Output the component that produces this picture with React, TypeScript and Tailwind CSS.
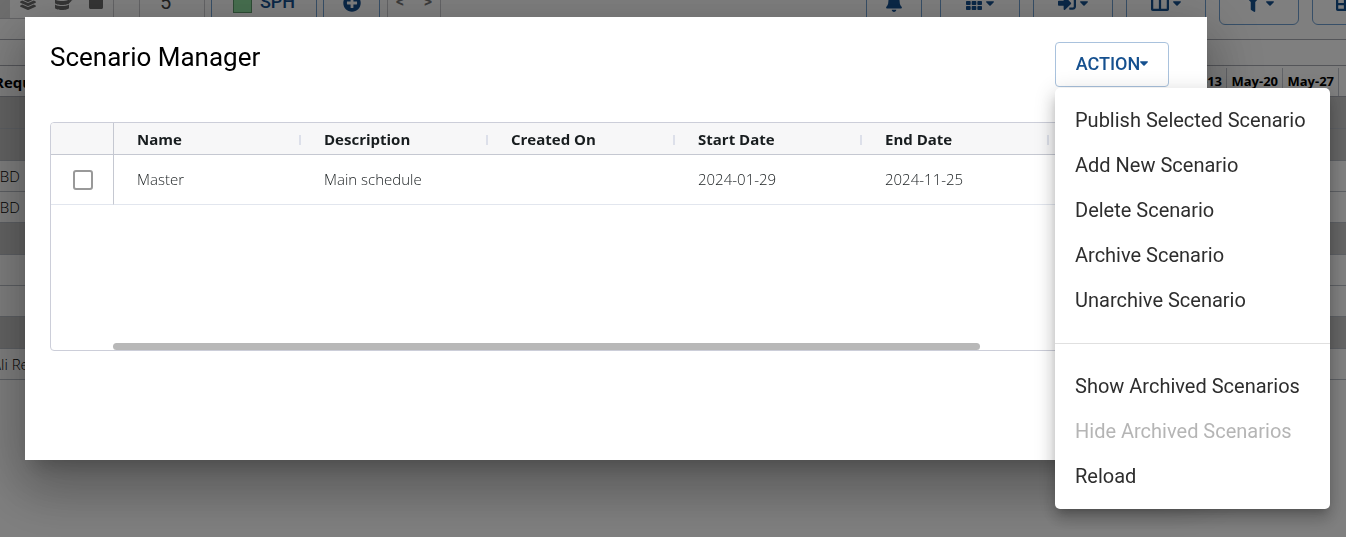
import { FaBell, FaPlusCircle, FaSignInAlt, FaColumns, FaFilter, FaTable, FaLayerGroup, FaDatabase, FaPen, FaSquare, FaTh } from "react-icons/fa";
import type { ReactNode } from "react";

function Caret() {
  return (
    <svg viewBox="0 0 8 5" className="h-[5px] w-2 shrink-0" aria-hidden="true">
      <path d="M0.7 0.2H7.3C7.9 0.2 8.2 0.9 7.8 1.3L4.6 4.5C4.3 4.8 3.7 4.8 3.4 4.5L0.2 1.3C-0.2 0.9 0.1 0.2 0.7 0.2Z" fill="currentColor" />
    </svg>
  );
}

function ToolButton({ label, className, children }: { label: string; className: string; children: ReactNode }) {
  return (
    <button
      type="button"
      aria-label={label}
      className={`flex h-12 shrink-0 items-center justify-center rounded-md border border-[#6f9fd0] pt-1 text-[#15508f] ${className}`}
    >
      {children}
    </button>
  );
}

function Toolbar() {
  return (
    <div className="-mt-[23px] flex h-[63px] items-start justify-between border-b border-[#a9abb3]">
      <div className="flex items-start">
        <div className="flex h-[42px] items-center gap-[18px] border-r border-b border-[#c8c8cc] pr-[9px] text-[#6b6b6b]">
          <span className="-mr-2 h-full w-[10px] bg-[#dcdcdc]" />
          <FaLayerGroup size={16} className="mt-2" />
          <span className="relative mt-2">
            <FaDatabase size={16} />
            <FaPen size={6} className="absolute top-1 -right-[3px]" />
          </span>
          <FaSquare size={16} className="mt-2" />
        </div>
        <input
          aria-label="Interval"
          defaultValue="5"
          className="ml-[25px] h-12 w-[66px] rounded-md border border-[#c8c8cc] pt-[2px] pl-5 text-xl text-[#444]"
        />
        <ToolButton label="SPH" className="ml-[6px] w-[106px] gap-2">
          <span className="size-[19px] border border-[#5b9a6a] bg-[#8ee0a0]" />
          <span className="pb-[2px] text-lg font-medium">SPH</span>
        </ToolButton>
        <ToolButton label="Add" className="ml-[6px] w-[57px]">
          <FaPlusCircle size={18} />
        </ToolButton>
        <div className="ml-[7px] flex h-12 w-[54px] items-center justify-between rounded-md border border-[#c8c8cc] px-2 pt-[2px] font-bold text-[#777]">
          <span>&lt;</span>
          <span>&gt;</span>
        </div>
      </div>
      <div className="-mr-8 flex gap-[13px]">
        <ToolButton label="Notifications" className="mr-[5px] w-[56px]"><FaBell size={18} /></ToolButton>
        <ToolButton label="Views" className="w-[80px] gap-1"><FaTh size={16} /><Caret /></ToolButton>
        <ToolButton label="Import" className="w-[80px] gap-1"><FaSignInAlt size={18} /><Caret /></ToolButton>
        <ToolButton label="Columns" className="w-[80px] gap-1"><FaColumns size={18} /><Caret /></ToolButton>
        <ToolButton label="Filter" className="w-[80px] gap-1"><FaFilter size={18} /><Caret /></ToolButton>
        <ToolButton label="Table" className="w-[66px]"><FaTable size={18} /></ToolButton>
      </div>
    </div>
  );
}

const scheduleRows = [
  { label: "", className: "h-8 bg-[#c8c8c8]" },
  { label: "", className: "h-8 bg-[#c8c8c8]" },
  { label: "TBD", className: "h-[31px] bg-white" },
  { label: "TBD", className: "h-[31px] bg-white" },
  { label: "", className: "h-8 bg-[#c8c8c8]" },
  { label: "", className: "h-[31px] bg-white" },
  { label: "", className: "h-[31px] bg-white" },
  { label: "", className: "h-8 bg-[#c8c8c8]" },
  { label: "Ali Reza", className: "h-[31px] bg-white" },
];

function Schedule() {
  return (
    <div className="font-['Open_Sans',sans-serif]">
      <div className="h-[26px] border-b border-[#a9abb3]" />
      <div className="flex h-[31px] items-center justify-between border-b border-[#a9abb3] pt-[2px] text-[13px] font-bold text-black">
        <span className="-ml-[6px] text-[15px]">Required</span>
        <div className="flex h-full">
          {["May-13", "May-20", "May-27"].map((week) => (
            <span key={week} className="flex w-14 items-center justify-end border-r border-[#c3c6cf] pr-1">
              {week}
            </span>
          ))}
          <span className="w-[7px]" />
        </div>
      </div>
      {scheduleRows.map((row, i) => (
        <div key={i} className={`flex items-center border-b border-[#babfc7] text-[15px] font-light text-black ${row.className}`}>
          <span className="-ml-2">{row.label}</span>
        </div>
      ))}
    </div>
  );
}

const headers = ["Name", "Description", "Created On", "Start Date", "End Date"];
const values = ["Master", "Main schedule", "", "2024-01-29", "2024-11-25"];

function ScenarioTable() {
  return (
    <div className="flex h-[229px] flex-col justify-between overflow-hidden rounded border border-[#ccced9] font-['Open_Sans',sans-serif]">
      <table className="w-full table-fixed border-separate border-spacing-0 text-left text-[15px]">
        <colgroup>
          <col className="w-[63px]" />
          {headers.map((h) => <col key={h} className="w-[187px]" />)}
          <col />
        </colgroup>
        <thead>
          <tr className="h-8 bg-[#f7f7f8] text-[#181d1f]">
            <th className="border-r border-b border-[#c5c8d1]" aria-label="Select" />
            {headers.map((h) => (
              <th key={h} className="border-b border-[#c5c8d1] p-0 pl-[23px] font-bold">
                <div className="flex items-center justify-between pt-[2px]">
                  {h}
                  <span className="h-[10px] w-[2px] bg-[#dde0ea]" />
                </div>
              </th>
            ))}
            <th className="border-b border-[#c5c8d1]" aria-label="More" />
          </tr>
        </thead>
        <tbody>
          <tr className="h-[50px] font-light text-[#181d1f]">
            <td className="border-r border-b border-r-[#c5c8d1] border-b-[#e2e6ee] p-0">
              <label className="flex items-center justify-center pl-[2px]">
                <input type="checkbox" aria-label="Select Master" className="size-5 appearance-none rounded-[3px] border-2 border-[#999] bg-white" />
              </label>
            </td>
            {values.map((v, i) => <td key={i} className="border-b border-[#e2e6ee] p-0 pl-[23px]">{v}</td>)}
            <td className="border-b border-[#e2e6ee]" />
          </tr>
        </tbody>
      </table>
      <div className="ml-[62px] flex">
        <div className="h-[7px] w-[867px] rounded bg-[#b8b8b8]" />
      </div>
    </div>
  );
}

function MenuItem({ children, disabled = false }: { children: ReactNode; disabled?: boolean }) {
  return (
    <button type="button" role="menuitem" disabled={disabled} className="h-[45px] px-5 pb-[2px] text-left whitespace-nowrap text-[#2e2e2e] disabled:text-[#b5b5b5]">
      {children}
    </button>
  );
}

function ActionMenu() {
  return (
    <div className="relative">
      <button type="button" aria-haspopup="menu" aria-expanded="true" className="flex h-[45px] w-[114px] items-center justify-center rounded border border-[#a9c2dd] pb-[2px] text-lg font-medium text-[#15508f]">
        ACTION<Caret />
      </button>
      <div role="menu" className="absolute top-full left-0 z-10 mt-px flex w-[275px] flex-col rounded-[5px] bg-white py-[10px] text-xl shadow-[0_6px_8px_-4px_rgba(0,0,0,0.2),0_11px_15px_1px_rgba(0,0,0,0.14),0_4px_20px_3px_rgba(0,0,0,0.12)]">
        <MenuItem>Publish Selected Scenario</MenuItem>
        <MenuItem>Add New Scenario</MenuItem>
        <MenuItem>Delete Scenario</MenuItem>
        <MenuItem>Archive Scenario</MenuItem>
        <MenuItem>Unarchive Scenario</MenuItem>
        <hr className="my-5 border-[#e0e0e0]" />
        <MenuItem>Show Archived Scenarios</MenuItem>
        <MenuItem disabled>Hide Archived Scenarios</MenuItem>
        <MenuItem>Reload</MenuItem>
      </div>
    </div>
  );
}

export default function App() {
  return (
    <div className="relative min-h-screen overflow-hidden bg-white font-[Roboto,sans-serif]">
      <Toolbar />
      <Schedule />
      <div className="fixed inset-0 bg-black/50 pt-[17px] pr-[139px] pl-[25px]">
        <section role="dialog" aria-labelledby="title" className="bg-white px-[25px] pt-[25px] pb-[109px] shadow-[0_14px_19px_-9px_rgba(0,0,0,0.2),0_30px_48px_4px_rgba(0,0,0,0.2),0_11px_58px_10px_rgba(0,0,0,0.14)]">
          <header className="mb-[35px] flex items-start justify-between pr-[13px]">
            <h1 id="title" className="text-[26px] leading-[30px] text-black">Scenario Manager</h1>
            <ActionMenu />
          </header>
          <ScenarioTable />
        </section>
      </div>
    </div>
  );
}
